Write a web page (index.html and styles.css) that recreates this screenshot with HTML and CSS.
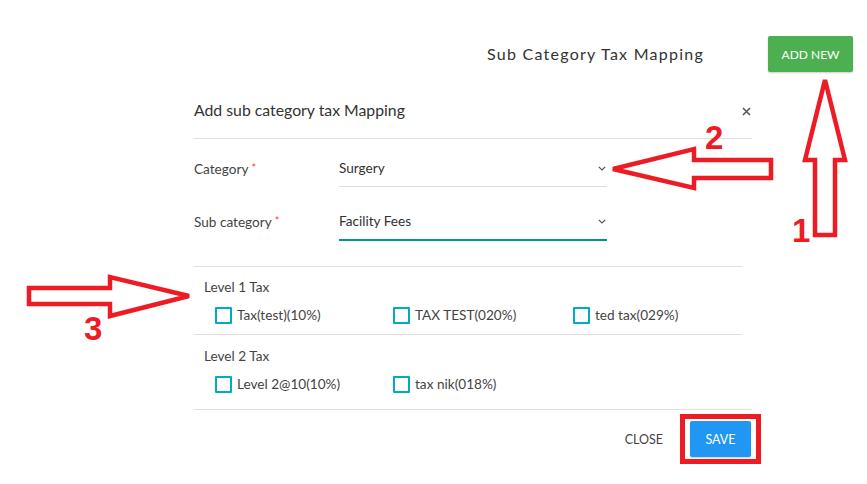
FILE: index.html
```html
<!DOCTYPE html>
<html>
<head>
<meta charset="utf-8">
<link rel="stylesheet" href="styles.css">
</head>
<body>
<div class="page">
  <header class="topbar">
    <h1 class="page-title">Sub Category Tax Mapping</h1>
    <button class="btn btn-green">ADD NEW</button>
  </header>

  <section class="modal">
    <div class="modal-head">
      <h2 class="modal-title">Add sub category tax Mapping</h2>
      <svg class="close-x" width="9" height="9" viewBox="0 0 9 9"><path d="M1 1L8 8M8 1L1 8" stroke="#555" stroke-width="1.6"/></svg>
    </div>

    <div class="form">
      <div class="form-row">
        <label class="form-label">Category <span class="req">*</span></label>
        <div class="select">
          <span>Surgery</span>
          <svg width="8" height="5" viewBox="0 0 8 5"><path d="M0.8 0.8L4 4L7.2 0.8" fill="none" stroke="#555" stroke-width="1.2"/></svg>
        </div>
      </div>
      <div class="form-row">
        <label class="form-label">Sub category <span class="req">*</span></label>
        <div class="select select-active">
          <span>Facility Fees</span>
          <svg width="8" height="5" viewBox="0 0 8 5"><path d="M0.8 0.8L4 4L7.2 0.8" fill="none" stroke="#555" stroke-width="1.2"/></svg>
        </div>
      </div>
    </div>

    <div class="tax-section">
      <div class="tax-group">
        <div class="tax-title">Level 1 Tax</div>
        <div class="tax-options">
          <label class="check"><span class="box"></span>Tax(test)(10%)</label>
          <label class="check"><span class="box"></span>TAX TEST(020%)</label>
          <label class="check"><span class="box"></span>ted tax(029%)</label>
        </div>
      </div>
      <div class="tax-group tax-group-last">
        <div class="tax-title">Level 2 Tax</div>
        <div class="tax-options">
          <label class="check"><span class="box"></span>Level 2@10(10%)</label>
          <label class="check"><span class="box"></span>tax nik(018%)</label>
        </div>
      </div>
    </div>

    <div class="modal-foot">
      <button class="btn btn-flat">CLOSE</button>
      <button class="btn btn-blue">SAVE</button>
    </div>
  </section>

  <svg class="annotations" width="867" height="484" viewBox="0 0 867 484">
    <g fill="none" stroke="#ed1c24" stroke-width="4.5" stroke-linejoin="miter">
      <polygon points="825,80 845,160 835,160 835,235 815,235 815,160 805,160"/>
      <polygon points="613,169 694,149 694,160 771,160 771,178 694,178 694,188"/>
      <polygon points="29,288 110,288 110,277 189,296 110,316 110,304 29,304"/>
      <rect x="682.5" y="416.5" width="76" height="45" stroke-width="5"/>
    </g>
    <g class="anno-num" fill="#ed1c24">
      <text x="705" y="149">2</text>
      <text x="792" y="242">1</text>
      <text x="84" y="340">3</text>
    </g>
  </svg>
</div>
</body>
</html>
```

FILE: styles.css
```css
* { box-sizing: border-box; }
html, body { margin: 0; padding: 0; background: #fff; }
body {
  font-family: Lato, "Noto Sans", "Liberation Sans", sans-serif;
  color: #333;
}
.page {
  position: relative;
  width: 867px;
  height: 484px;
  overflow: hidden;
}
.topbar {
  display: flex;
  justify-content: flex-end;
  align-items: center;
  padding: 36px 14px 0 0;
  height: 72px;
}
.page-title {
  margin: 0 64px 0 0;
  font-size: 16px;
  font-weight: 400;
  letter-spacing: 1.25px;
  color: #333;
  line-height: 36px;
}
.btn {
  font-family: inherit;
  border: none;
  background: none;
  cursor: pointer;
  font-size: 12.5px;
  padding: 0;
}
.btn-green {
  width: 85px;
  height: 36px;
  background: #4caf50;
  color: #fff;
  font-size: 12px;
  border-radius: 2px;
  box-shadow: 0 1px 2px rgba(0,0,0,0.2);
}
.modal {
  margin-left: 194px;
  width: 558px;
}
.modal-head {
  display: flex;
  justify-content: space-between;
  align-items: flex-start;
  padding: 27px 1px 17px 0;
  border-bottom: 1px solid #e0e0e0;
}
.modal-title {
  margin: 0;
  font-size: 15.8px;
  font-weight: 400;
  line-height: 22px;
  color: #333;
}
.close-x { margin-top: 8px; }
.form {
  padding-top: 11px;
  display: flex;
  flex-direction: column;
  gap: 16px;
}
.form-row {
  display: flex;
  align-items: flex-start;
}
.form-label {
  width: 145px;
  font-size: 13.6px;
  line-height: 36px;
  color: #444;
}
.req {
  color: #f44336;
  font-size: 11px;
  vertical-align: 2px;
}
.select {
  width: 268px;
  height: 37px;
  display: flex;
  align-items: center;
  justify-content: space-between;
  padding-right: 1px;
  border-bottom: 1px solid #ddd;
  font-size: 13.6px;
  color: #333;
}
.select-active {
  height: 38px;
  border-bottom: 2px solid #009688;
}
.tax-section {
  margin-top: 25px;
  width: 548px;
  border-top: 1px solid #e0e0e0;
}
.tax-group {
  padding: 11px 0 10px 10px;
  border-bottom: 1px solid #e0e0e0;
}
.tax-group-last {
  padding-top: 12px;
  padding-bottom: 16px;
  width: 558px;
}
.tax-title {
  font-size: 13.6px;
  line-height: 18px;
  color: #444;
}
.tax-options {
  margin-top: 10px;
  padding-left: 11px;
  display: grid;
  grid-template-columns: 178px 180px 180px;
}
.check {
  display: flex;
  align-items: center;
  font-size: 13.6px;
  line-height: 18px;
  color: #444;
}
.box {
  width: 17px;
  height: 17px;
  border: 2px solid #00acc1;
  border-radius: 1px;
  margin-right: 5px;
}
.modal-foot {
  display: flex;
  justify-content: flex-end;
  align-items: center;
  padding-top: 11px;
  padding-right: 1px;
}
.btn-flat {
  color: #444;
  margin-right: 27px;
  height: 36px;
}
.btn-blue {
  width: 61px;
  height: 36px;
  background: #2196f3;
  color: #fff;
  border-radius: 2px;
  box-shadow: 0 1px 2px rgba(0,0,0,0.2);
}
.annotations {
  position: absolute;
  left: 0;
  top: 0;
  pointer-events: none;
}
.anno-num {
  font-family: "Liberation Sans", Arial, sans-serif;
  font-weight: 700;
  font-size: 33px;
}
```
